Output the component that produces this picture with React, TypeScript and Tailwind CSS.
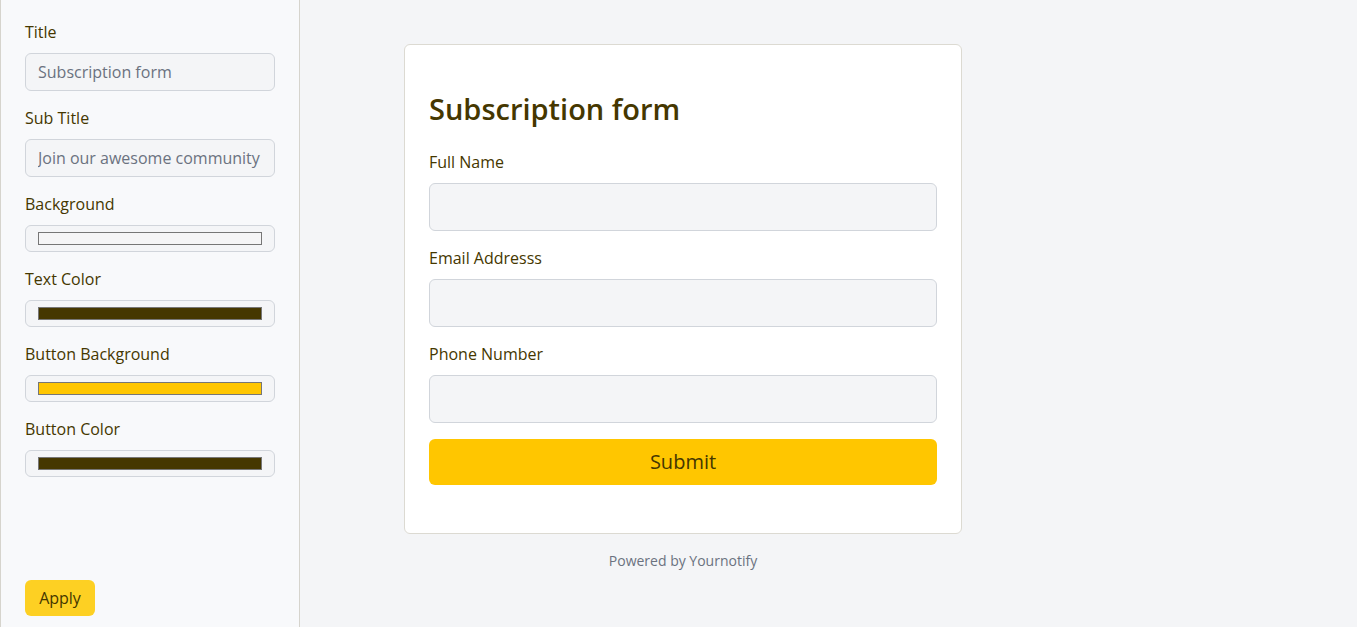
import { useState } from 'react';

const textColor = '#453700';

export default function App() {
  const [title, setTitle] = useState('Subscription form');
  const [subTitle, setSubTitle] = useState('Join our awesome community');

  const swatches = [
    { label: 'Background', color: '#f5f5f6' },
    { label: 'Text Color', color: '#453700' },
    { label: 'Button Background', color: '#ffc600' },
    { label: 'Button Color', color: '#453700' },
  ];

  return (
    <div
      className="flex h-[627px] w-full bg-[#f4f5f7] text-[#453700]"
      style={{ fontFamily: '"Open Sans", "Liberation Sans", sans-serif' }}
    >
      {/* Sidebar */}
      <aside className="flex w-[300px] shrink-0 flex-col justify-between border-x border-[#d6d4cd] bg-[#f8f9fb] px-6 pb-[11px] pt-[21px]">
        <div className="flex flex-col">
          <label className="text-[16px] leading-[22px]">Title</label>
          <input
            value={title}
            onChange={(e) => setTitle(e.target.value)}
            className="mt-[10px] h-[38px] w-[250px] rounded-md border border-[#d1d5db] bg-[#f4f5f7] px-3 text-[16px] text-[#6b7280] outline-none"
          />
          <label className="mt-[16px] text-[16px] leading-[22px]">Sub Title</label>
          <input
            value={subTitle}
            onChange={(e) => setSubTitle(e.target.value)}
            className="mt-[10px] h-[38px] w-[250px] rounded-md border border-[#d1d5db] bg-[#f4f5f7] px-3 text-[16px] text-[#6b7280] outline-none"
          />
          {swatches.map((s) => (
            <div key={s.label} className="flex flex-col">
              <label className="mt-[16px] text-[16px] leading-[22px]">{s.label}</label>
              <div className="mt-[10px] flex h-[27px] w-[250px] items-center rounded-md border border-[#d1d5db] bg-[#f4f5f7] px-3">
                <div
                  className="h-[13px] w-full border border-[#767676]"
                  style={{ backgroundColor: s.color }}
                />
              </div>
            </div>
          ))}
        </div>
        <button className="h-9 w-[70px] rounded-md bg-[#fdd023] text-[16px] text-[#453700]">
          Apply
        </button>
      </aside>

      {/* Preview */}
      <main className="flex-1">
        <div className="ml-[104px] mt-[44px] flex w-[558px] flex-col items-center">
          <div className="w-full rounded-md border border-[#dcdad2] bg-white px-6 pb-12 pt-[45px]">
            <h1 className="text-[29px] font-semibold leading-[38px]" style={{ color: textColor }}>
              {title}
            </h1>
            <div className="mt-[23px] flex flex-col">
              {['Full Name', 'Email Addresss', 'Phone Number'].map((f, i) => (
                <div key={f} className={i > 0 ? 'mt-[16px] flex flex-col' : 'flex flex-col'}>
                  <label className="text-[16px] leading-[22px]">{f}</label>
                  <input className="mt-[10px] h-12 w-full rounded-md border border-[#d1d5db] bg-[#f4f5f7] px-3 outline-none" />
                </div>
              ))}
            </div>
            <button className="mt-4 h-[46px] w-full rounded-md bg-[#ffc600] text-[20px] text-[#453700]">
              Submit
            </button>
          </div>
          <p className="mt-[17px] text-[14px] leading-5 text-[#6b7280]">Powered by Yournotify</p>
        </div>
      </main>
    </div>
  );
}
